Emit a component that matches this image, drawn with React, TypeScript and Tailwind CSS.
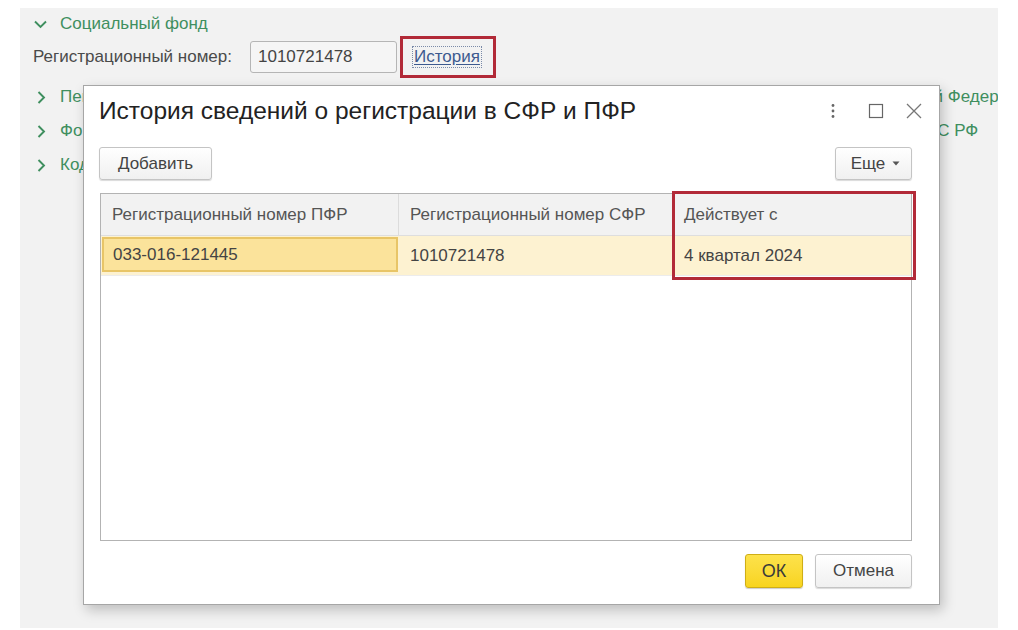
import React from "react";

function ChevronDown() {
  return (
    <svg width="13" height="9" viewBox="0 0 13 9" className="shrink-0">
      <path d="M1 1.5 L6.5 7 L12 1.5" fill="none" stroke="#3f8f5f" strokeWidth="1.9" />
    </svg>
  );
}

function ChevronRight() {
  return (
    <svg width="9" height="13" viewBox="0 0 9 13" className="shrink-0">
      <path d="M1.5 1 L7 6.5 L1.5 12" fill="none" stroke="#3f8f5f" strokeWidth="1.9" />
    </svg>
  );
}

function GroupRow({ left, right, rightStart }: { left: string; right?: string; rightStart: string }) {
  return (
    <div className="h-[34px] flex items-center whitespace-nowrap">
      <div className={`flex items-center shrink-0 ${rightStart}`}>
        <div className="w-[40px] flex justify-center pl-[2px]">
          <ChevronRight />
        </div>
        <span className="text-[#3f8f5f]">{left}</span>
      </div>
      {right && <span className="text-[#3f8f5f]">{right}</span>}
    </div>
  );
}

function Btn({ children, className = "" }: { children: React.ReactNode; className?: string }) {
  return (
    <div
      className={`h-full flex items-center justify-center rounded-[3px] border border-[#c4c4c4] bg-gradient-to-b from-white to-[#f0f0f0] shadow-[0_1px_1px_rgba(0,0,0,0.15)] text-[#444] ${className}`}
    >
      {children}
    </div>
  );
}

export default function App() {
  return (
    <div className="w-[1018px] h-[630px] bg-white pt-[8px] pl-[20px] font-['Liberation_Sans',Arial,sans-serif]">
      <div className="relative w-[978px] h-[620px] bg-[#f2f2f2] overflow-hidden text-[17px] text-[#4a4a4a]">
        {/* background form */}
        <div className="flex flex-col pt-[2px]">
          <div className="h-[28px] flex items-center">
            <div className="w-[40px] flex justify-center pt-[1px]">
              <ChevronDown />
            </div>
            <span className="text-[#3f8f5f]">Социальный фонд</span>
          </div>
          <div className="mt-[3px] h-[32px] flex items-center pl-[13px]">
            <span className="w-[217px] shrink-0 whitespace-nowrap">Регистрационный номер:</span>
            <div className="w-[147px] h-[32px] border border-[#b5b5b5] rounded-[3px] bg-[#f5f5f5] flex items-center pl-[7px] text-[#444]">
              1010721478
            </div>
            <div className="ml-[3px] w-[96px] h-[42px] border-[3px] border-[#b22a38] flex items-center pl-[9px]">
              <span className="border border-dotted border-[#7a8aa8] px-[1px] leading-[20px] text-[#3d5a8f] underline underline-offset-[2px]">
                История
              </span>
            </div>
          </div>
          <div className="mt-[7px]">
            <GroupRow left="Пенсионный фонд" right="Российской Федерации" rightStart="w-[832px]" />
            <GroupRow left="Фонд социального страхования" right="ФСС РФ" rightStart="w-[892px]" />
            <GroupRow left="Коды статистики" rightStart="w-[400px]" />
          </div>
        </div>

        {/* dialog */}
        <div className="absolute left-[63px] top-[77px] w-[857px] h-[520px] bg-white border border-[#a6a6a6] shadow-[3px_5px_12px_rgba(0,0,0,0.22)] flex flex-col">
          <div className="h-[50px] shrink-0 flex items-center pl-[15px] pr-[16px]">
            <span className="text-[24.5px] text-[#222] whitespace-nowrap">
              История сведений о регистрации в СФР и ПФР
            </span>
            <div className="ml-auto flex items-center">
              <svg width="6" height="16" viewBox="0 0 6 16">
                <circle cx="3" cy="2.5" r="1.4" fill="#666" />
                <circle cx="3" cy="8" r="1.4" fill="#666" />
                <circle cx="3" cy="13.5" r="1.4" fill="#666" />
              </svg>
              <svg width="16" height="16" viewBox="0 0 16 16" className="ml-[32px]">
                <rect x="1.5" y="1.5" width="13" height="13" fill="none" stroke="#666" strokeWidth="1.2" />
              </svg>
              <svg width="18" height="18" viewBox="0 0 18 18" className="ml-[21px]">
                <path d="M2 2 L16 16 M16 2 L2 16" stroke="#777" strokeWidth="1.3" />
              </svg>
            </div>
          </div>

          <div className="mt-[11px] h-[33px] shrink-0 flex pl-[15px] pr-[27px]">
            <Btn className="w-[113px]">Добавить</Btn>
            <div className="ml-auto h-full">
              <Btn className="w-[77px] gap-[7px] pl-[4px]">
                <span>Еще</span>
                <svg width="8" height="5" viewBox="0 0 8 5">
                  <path d="M0.5 0.5 L7.5 0.5 L4 4.5 Z" fill="#555" />
                </svg>
              </Btn>
            </div>
          </div>

          <div className="mt-[13px] ml-[16px] mr-[27px] h-[348px] shrink-0 relative border border-[#b3b3b3] bg-white">
            <div className="grid grid-cols-[298px_274px_1fr] h-[42px] bg-[#f2f2f2] border-b border-[#dedede] text-[#555]">
              <div className="flex items-center pl-[11px] border-r border-[#dcdcdc] whitespace-nowrap">
                Регистрационный номер ПФР
              </div>
              <div className="flex items-center pl-[11px] border-r border-[#dcdcdc] whitespace-nowrap">
                Регистрационный номер СФР
              </div>
              <div className="flex items-center pl-[11px] whitespace-nowrap">Действует с</div>
            </div>
            <div className="grid grid-cols-[298px_274px_1fr] h-[40px] bg-[#fdf2d1] border-b border-[#ececec] text-[#444]">
              <div className="m-[1px] mb-[3px] flex items-center pl-[9px] bg-[#fbe39b] border-2 border-[#e8c567]">
                033-016-121445
              </div>
              <div className="flex items-center pl-[11px]">1010721478</div>
              <div className="flex items-center pl-[11px]">4 квартал 2024</div>
            </div>
            <div className="absolute left-[571px] top-[-3px] w-[244px] h-[89px] border-[3px] border-[#b22a38]" />
          </div>

          <div className="mt-[13px] h-[34px] shrink-0 flex justify-end gap-[12px] pr-[27px]">
            <div className="w-[58px] h-full flex items-center justify-center rounded-[3px] border border-[#cfae16] bg-gradient-to-b from-[#fde24a] to-[#f8d41c] shadow-[0_1px_1px_rgba(0,0,0,0.2)] text-[18px] text-[#3a3a3a]">
              ОК
            </div>
            <Btn className="w-[97px]">Отмена</Btn>
          </div>
        </div>
      </div>
    </div>
  );
}
